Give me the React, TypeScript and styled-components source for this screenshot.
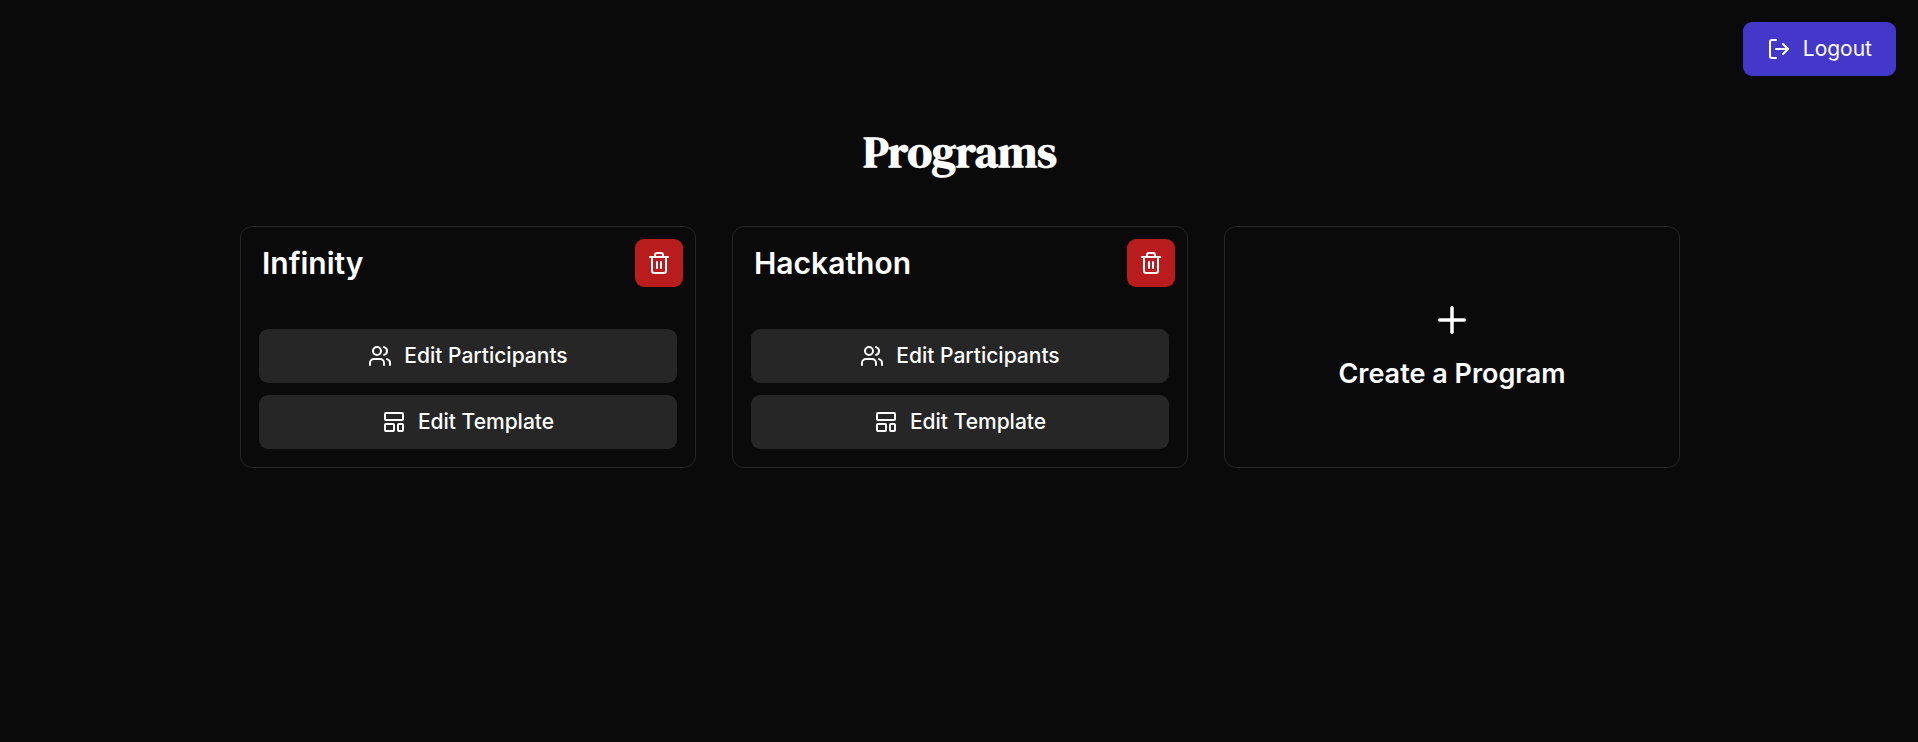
import React from "react";
import styled, { createGlobalStyle } from "styled-components";
import { LogOut, Trash2, Users, Plus, LayoutTemplate } from "lucide-react";

const GlobalStyle = createGlobalStyle`
  *, *::before, *::after { box-sizing: border-box; }
  body {
    margin: 0;
    background: #0a0a0a;
    color: #fff;
    font-family: Inter, "Liberation Sans", sans-serif;
  }
`;

const Page = styled.div`
  display: flex;
  flex-direction: column;
`;

const TopBar = styled.header`
  display: flex;
  justify-content: flex-end;
  padding: 22px 22px 0;
`;

const Button = styled.button<{ $tone: "primary" | "secondary" }>`
  display: flex;
  align-items: center;
  justify-content: center;
  gap: 12px;
  height: 54px;
  padding: 0 24px;
  border: 0;
  border-radius: 9px;
  background: ${(p) => (p.$tone === "primary" ? "#4338ca" : "#262626")};
  color: #fff;
  font-family: Inter, "Liberation Sans", sans-serif;
  font-size: 21px;
  line-height: 32px;
  font-weight: ${(p) => (p.$tone === "primary" ? 400 : 500)};
  cursor: pointer;
`;

const DeleteButton = styled.button`
  display: grid;
  place-items: center;
  width: 48px;
  height: 48px;
  padding: 0;
  border: 0;
  border-radius: 9px;
  background: #b91c1c;
  color: #fff;
  cursor: pointer;
`;

const Main = styled.main`
  width: 100%;
  max-width: 1442px;
  margin: 0 auto;
  padding: 48px 0 48px 2px;
`;

const Title = styled.h1`
  margin: 0 0 48px;
  text-align: center;
  font: 700 45px/54px "DM Serif Display", "Liberation Serif", serif;
`;

const Grid = styled.div`
  display: grid;
  grid-template-columns: repeat(auto-fit, minmax(320px, 1fr));
  gap: 36px;
`;

const Card = styled.article`
  display: flex;
  flex-direction: column;
  padding: 12px 18px 18px;
  border: 1px solid #262626;
  border-radius: 12px;
`;

const CardHeader = styled.div`
  display: flex;
  align-items: center;
  justify-content: space-between;
  margin: 0 -6px 42px 3px;
`;

const CardTitle = styled.h2`
  margin: 0;
  font-size: 30px;
  line-height: 36px;
  font-weight: 600;
`;

const Actions = styled.div`
  display: flex;
  flex-direction: column;
  gap: 12px;
`;

const CreateCard = styled.button`
  display: flex;
  flex-direction: column;
  align-items: center;
  justify-content: center;
  gap: 12px;
  border: 1px solid #262626;
  border-radius: 12px;
  background: transparent;
  color: #fff;
  font: 600 27px/42px Inter, "Liberation Sans", sans-serif;
  cursor: pointer;
`;

const programs = ["Infinity", "Hackathon"];

export default function App() {
  return (
    <Page>
      <GlobalStyle />
      <TopBar>
        <Button $tone="primary"><LogOut size={24} />Logout</Button>
      </TopBar>
      <Main>
        <Title>Programs</Title>
        <Grid>
          {programs.map((name) => (
            <Card key={name}>
              <CardHeader>
                <CardTitle>{name}</CardTitle>
                <DeleteButton aria-label={`Delete ${name}`}><Trash2 size={24} /></DeleteButton>
              </CardHeader>
              <Actions>
                <Button $tone="secondary"><Users size={24} />Edit Participants</Button>
                <Button $tone="secondary"><LayoutTemplate size={24} />Edit Template</Button>
              </Actions>
            </Card>
          ))}
          <CreateCard><Plus size={42} />Create a Program</CreateCard>
        </Grid>
      </Main>
    </Page>
  );
}
